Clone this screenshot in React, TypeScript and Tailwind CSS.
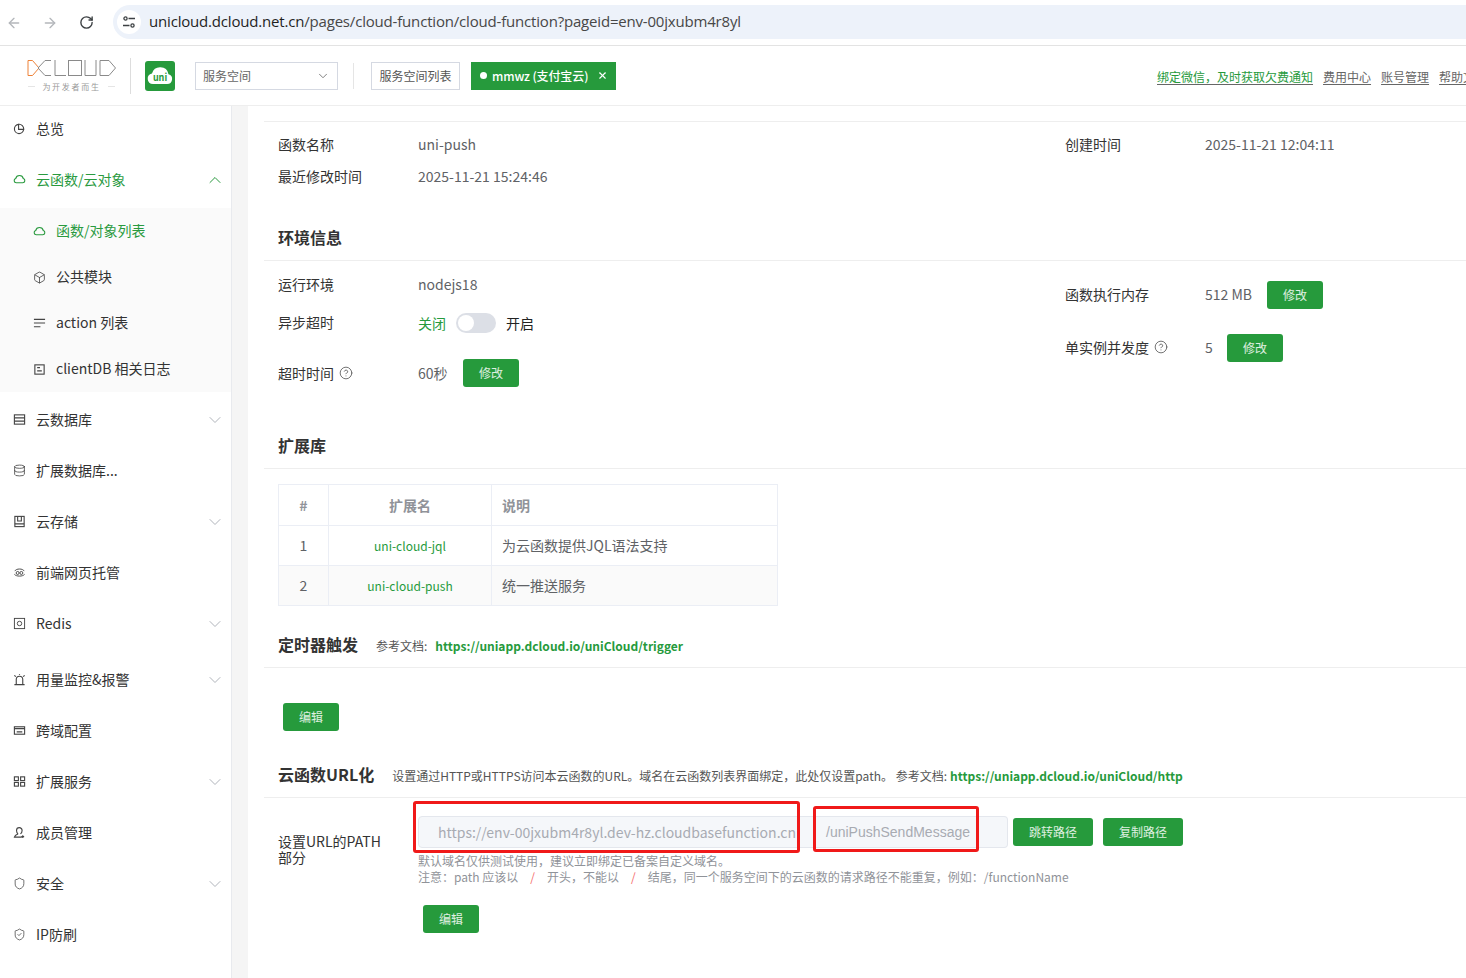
import {
  ArrowLeft,
  ArrowRight,
  Box,
  ChevronDown,
  ChevronUp,
  CircleHelp,
  Database,
  RotateCw,
  Shield,
  ShieldCheck,
  X,
} from "lucide-react";
import type { ReactNode } from "react";

const ic = "w-[13px] h-[13px]";

function Svg({ children }: { children: ReactNode }) {
  return (
    <svg viewBox="0 0 14 14" className={ic} fill="none" stroke="currentColor" strokeWidth="1.2">
      {children}
    </svg>
  );
}

const icons: Record<string, ReactNode> = {
  pie: (
    <Svg>
      <path d="M6 2.500a5 5 0 1 0 5.500 5.500H6z" />
      <path d="M6 2.500a5 5 0 0 1 5.500 5.500" />
    </Svg>
  ),
  cloud: (
    <Svg>
      <path d="M3.500 10.500h7a2.300 2.300 0 0 0 .6-4.500 4.200 4.200 0 0 0-8.200 0 2.300 2.300 0 0 0 .6 4.500z" />
    </Svg>
  ),
  box: <Box className={ic} strokeWidth={1.5} />,
  lines: (
    <Svg>
      <path d="M1 2.500h12M1 6.500h12M1 10.500h7" />
    </Svg>
  ),
  log: (
    <Svg>
      <rect x="2" y="2" width="10" height="10" />
      <path d="M4.500 8.500h5M4.500 5h3" />
    </Svg>
  ),
  table: (
    <Svg>
      <rect x="1.500" y="2" width="11" height="10" />
      <path d="M1.500 5.300h11M1.500 8.700h11" />
    </Svg>
  ),
  db: <Database className={ic} strokeWidth={1.5} />,
  store: (
    <Svg>
      <rect x="2" y="1.500" width="10" height="11" />
      <path d="M2 9.500h10M5 1.500v5h4v-5" />
    </Svg>
  ),
  host: (
    <Svg>
      <path d="M2 5.500c1-3 9-3 10 0M1.500 9c2 2.500 9 2.500 11 0" strokeWidth="1" />
      <circle cx="5" cy="7.500" r="1.600" strokeWidth="1" />
      <circle cx="9" cy="7.500" r="1.600" strokeWidth="1" />
    </Svg>
  ),
  redis: (
    <Svg>
      <rect x="1.500" y="1.500" width="11" height="11" strokeWidth="1" />
      <circle cx="7" cy="7" r="2.400" strokeWidth="1" />
    </Svg>
  ),
  alarm: (
    <Svg>
      <path d="M1.500 12.500h11M3.500 12.500V7a3.500 3.500 0 0 1 7 0v5.500" />
      <path d="M1.500 2.500l1.500 1.500M12.500 2.500L11 4M7 1v1" />
    </Svg>
  ),
  cors: (
    <Svg>
      <rect x="1.500" y="3" width="11" height="8" />
      <path d="M1.500 5h11M4 8.500h6" />
    </Svg>
  ),
  grid: (
    <Svg>
      <rect x="1.500" y="2" width="4.300" height="4" />
      <rect x="8.200" y="2" width="4.300" height="4" />
      <rect x="1.500" y="8" width="4.300" height="4" />
      <rect x="8.200" y="8" width="4.300" height="4" />
    </Svg>
  ),
  user: (
    <Svg>
      <path d="M5.500 8.500C4 7.500 3.800 6 3.800 4.800a3 3 0 0 1 6 0c0 1.200-.3 2.700-1.800 3.700M5.500 8.500c-1.500.5-3.500 1-4 3.500h8M10.500 10v3M9 11.500h3" />
    </Svg>
  ),
  shield: <Shield className={ic} strokeWidth={1.4} />,
  shieldCheck: <ShieldCheck className={ic} strokeWidth={1.4} />,
};

type MenuItem = { label: string; icon: string; arrow?: boolean };

const topMenu: MenuItem[] = [
  { label: "云数据库", icon: "table", arrow: true },
  { label: "扩展数据库...", icon: "db" },
  { label: "云存储", icon: "store", arrow: true },
  { label: "前端网页托管", icon: "host" },
  { label: "Redis", icon: "redis", arrow: true },
];

const bottomMenu: MenuItem[] = [
  { label: "跨域配置", icon: "cors" },
  { label: "扩展服务", icon: "grid", arrow: true },
  { label: "成员管理", icon: "user" },
  { label: "安全", icon: "shield", arrow: true },
  { label: "IP防刷", icon: "shieldCheck" },
];

const subMenu = [
  { label: "函数/对象列表", icon: "cloud", active: true },
  { label: "公共模块", icon: "box" },
  { label: "action 列表", icon: "lines" },
  { label: "clientDB 相关日志", icon: "log" },
];

const chevron = "w-[20px] h-[20px] text-[#b0b4bb]";

function MenuRow({ item }: { item: MenuItem }) {
  return (
    <div className="h-[51px] flex items-center pl-[13px] pr-[6px] text-[#333]">
      <span className="w-[23px] flex items-center text-[#444]">{icons[item.icon]}</span>
      <span className="flex-1">{item.label}</span>
      {item.arrow && <ChevronDown className={chevron} strokeWidth={1.2} />}
    </div>
  );
}

function Sidebar() {
  return (
    <aside className="w-[231px] shrink-0 text-[14px]">
      <div className="h-[45px] flex items-center pl-[13px] text-[#333]">
        <span className="w-[23px] flex items-center text-[#444]">{icons.pie}</span>
        总览
      </div>
      <div className="h-[57px] flex items-center pl-[13px] pr-[6px] text-[#2a9a3f]">
        <span className="w-[23px] flex items-center">{icons.cloud}</span>
        <span className="flex-1">云函数/云对象</span>
        <ChevronUp className="w-[20px] h-[20px]" strokeWidth={1.2} />
      </div>
      <div className="bg-[#fafafa] h-[184px]">
        {subMenu.map((s) => (
          <div
            key={s.label}
            className={`h-[46px] flex items-center pl-[33px] ${s.active ? "text-[#2a9a3f]" : "text-[#333]"}`}
          >
            <span className={`w-[23px] flex items-center ${s.active ? "" : "text-[#444]"}`}>{icons[s.icon]}</span>
            <span className="pb-[2px]">{s.label}</span>
          </div>
        ))}
      </div>
      <div className="pt-[2px]">
        {topMenu.map((m) => (
          <MenuRow key={m.label} item={m} />
        ))}
        <div className="h-[56px] pt-[5px] flex items-center pl-[13px] pr-[6px] text-[#333]">
          <span className="w-[23px] flex items-center text-[#444]">{icons.alarm}</span>
          <span className="flex-1">用量监控&amp;报警</span>
          <ChevronDown className={chevron} strokeWidth={1.2} />
        </div>
        {bottomMenu.map((m) => (
          <MenuRow key={m.label} item={m} />
        ))}
      </div>
    </aside>
  );
}

function BrowserBar() {
  return (
    <div className="h-[46px] border-b border-[#e3e3e3] flex items-center pl-[6px] font-['Open_Sans','Noto_Sans_CJK_SC',sans-serif]">
      <ArrowLeft className="w-[16px] h-[16px] text-[#b4b7bb]" strokeWidth={2} />
      <ArrowRight className="w-[16px] h-[16px] text-[#b4b7bb] ml-[20px]" strokeWidth={2} />
      <RotateCw className="w-[15px] h-[15px] text-[#3c4043] ml-[21px]" strokeWidth={2.2} />
      <div className="ml-[19px] flex-1 h-[34px] -mt-[1px] rounded-l-full bg-[#edf2fa] flex items-center pl-[4px]">
        <span className="w-[24px] h-[24px] rounded-full bg-white flex items-center justify-center">
          <svg viewBox="0 0 14 14" className="w-[14px] h-[14px]" fill="none" stroke="#3c4043" strokeWidth="1.300">
            <circle cx="3.500" cy="3.500" r="1.600" />
            <path d="M6.500 3.500H13M1 10.500h6.500" />
            <circle cx="10.500" cy="10.500" r="1.600" />
          </svg>
        </span>
        <span className="ml-[8px] pb-[2px] text-[15px] text-[#1f1f1f] tracking-[-0.185px] whitespace-nowrap">
          unicloud.dcloud.net.cn<span className="text-[#474747]">/pages/cloud-function/cloud-function?pageid=env-00jxubm4r8yl</span>
        </span>
      </div>
    </div>
  );
}

function Logo() {
  return (
    <div className="w-[91px] flex flex-col items-center">
      <svg viewBox="0 0 90 18" className="w-[90px] h-[18px]" fill="none" strokeWidth="1">
        <path d="M1 1.500h4.500L12 9l-6.500 7.500H1z" stroke="#ee8238" />
        <path d="M24 1.500h-6L11 9l7 7.500h6" stroke="#8a8a8a" />
        <path d="M28 1v15.500h11" stroke="#8a8a8a" />
        <rect x="41.500" y="1.500" width="13" height="15" stroke="#8a8a8a" />
        <path d="M58 1v15.500h11V1" stroke="#8a8a8a" />
        <path d="M73 1.500h9l6.500 7.500-6.500 7.500h-9z" stroke="#8a8a8a" />
      </svg>
      <div className="mt-[4px] flex items-center gap-[7px] text-[8px] leading-[12px] text-[#999] tracking-[1.7px]">
        <span className="w-[7px] h-px bg-[#e5e5e5]" />
        为开发者而生
        <span className="w-[7px] h-px bg-[#e5e5e5]" />
      </div>
    </div>
  );
}

function Header() {
  return (
    <header className="h-[60px] border-b border-[#eee] flex items-center pl-[26px] text-[12px] overflow-hidden">
      <Logo />
      <span className="ml-[13px] w-px h-[36px] bg-[#ddd]" />
      <span className="ml-[14px] w-[30px] h-[30px] rounded-[3px] bg-[#269a3c] flex items-center justify-center">
        <svg viewBox="0 0 26 20" className="w-[26px] h-[20px]">
          <path
            d="M6 18h14a5 5 0 0 0 1.500-9.800A8.500 8.500 0 0 0 5 7.500 5.300 5.300 0 0 0 6 18z"
            fill="#fff"
          />
          <text x="13" y="15" textAnchor="middle" fontSize="9" fontWeight="700" fill="#269a3c">
            uni
          </text>
        </svg>
      </span>
      <div className="ml-[20px] w-[143px] h-[28px] border border-[#d5d9e2] flex items-center justify-between pl-[7px] pr-[7px] text-[#666]">
        服务空间
        <ChevronDown className="w-[14px] h-[14px] text-[#666]" strokeWidth={1.4} />
      </div>
      <span className="ml-[15px] w-px h-[26px] bg-[#e5e5e5]" />
      <div className="ml-[17px] w-[89px] h-[28px] border border-[#d5d9e2] flex items-center justify-center text-[#555]">
        服务空间列表
      </div>
      <div className="ml-[11px] w-[145px] h-[28px] bg-[#269a3c] text-white flex items-center pl-[9px]">
        <span className="w-[7px] h-[7px] rounded-full bg-white mr-[5px]" />
        <span className="font-medium tracking-[-0.1px]">mmwz (支付宝云)</span>
        <X className="w-[11px] h-[11px] ml-[9px]" strokeWidth={2.4} />
      </div>
      <div className="flex-1" />
      <div className="flex items-center gap-[10px] whitespace-nowrap mt-[2px] w-[309px] shrink-0 underline underline-offset-2 text-[#666]">
        <span className="text-[#269a3c]">绑定微信，及时获取欠费通知</span>
        <span>费用中心</span>
        <span>账号管理</span>
        <span>帮助文档</span>
      </div>
    </header>
  );
}

function GreenButton({ children, className = "" }: { children: ReactNode; className?: string }) {
  return (
    <button className={`h-[28px] bg-[#269a3c] text-white/85 text-[12px] rounded-[3px] flex items-center justify-center ${className}`}>
      {children}
    </button>
  );
}

function SectionHead({ title, className = "", children }: { title: string; className?: string; children?: ReactNode }) {
  return (
    <div className={`h-[45px] border-b border-[#eee] flex items-center pl-[14px] pb-[2px] ${className}`}>
      <span className="text-[16px] font-bold text-[#333]">{title}</span>
      {children}
    </div>
  );
}

function Help() {
  return <CircleHelp className="inline-block w-[14px] h-[14px] ml-[5px] text-[#555]" strokeWidth={1.4} />;
}

const link = "font-bold text-[12px] text-[#269a3c]";

function Main() {
  return (
    <main className="flex-1 min-w-0 ml-[16px] text-[14px] text-[#333] overflow-hidden">
      <div className="mt-[15px] border-t border-[#eee] pt-[6px] pl-[14px] h-[72px] flex">
        <div className="w-[787px]">
          <div className="h-[32px] flex items-center">
            <span className="w-[140px]">函数名称</span>
            <span className="text-[#606266]">uni-push</span>
          </div>
          <div className="h-[32px] flex items-center">
            <span className="w-[140px]">最近修改时间</span>
            <span className="text-[#606266]">2025-11-21 15:24:46</span>
          </div>
        </div>
        <div className="h-[32px] flex items-center">
          <span className="w-[140px]">创建时间</span>
          <span className="text-[#606266]">2025-11-21 12:04:11</span>
        </div>
      </div>

      <SectionHead title="环境信息" className="mt-[23px]" />
      <div className="flex pl-[14px] h-[126px]">
        <div className="w-[787px] pt-[7px]">
          <div className="h-[32px] flex items-center">
            <span className="w-[140px]">运行环境</span>
            <span className="text-[#606266]">nodejs18</span>
          </div>
          <div className="h-[32px] mt-[6px] flex items-center">
            <span className="w-[140px]">异步超时</span>
            <span className="text-[#269a3c] mt-[2px]">关闭</span>
            <span className="ml-[10px] mt-[2px] w-[40px] h-[20px] rounded-full bg-[#dcdfe6] p-[2px]">
              <span className="block w-[16px] h-[16px] rounded-full bg-white" />
            </span>
            <span className="ml-[10px] mt-[2px] text-[#222]">开启</span>
          </div>
          <div className="h-[28px] mt-[21px] flex items-center">
            <span className="w-[140px] flex items-center">
              超时时间
              <Help />
            </span>
            <span className="text-[#606266] w-[45px]">60秒</span>
            <GreenButton className="w-[56px]">修改</GreenButton>
          </div>
        </div>
        <div className="pt-[20px]">
          <div className="h-[28px] flex items-center">
            <span className="w-[140px] pb-[2px]">函数执行内存</span>
            <span className="text-[#606266] w-[62px] pb-[2px]">512 MB</span>
            <GreenButton className="w-[56px]">修改</GreenButton>
          </div>
          <div className="h-[28px] mt-[25px] flex items-center">
            <span className="w-[140px] flex items-center pb-[2px]">
              单实例并发度
              <Help />
            </span>
            <span className="text-[#606266] w-[22px] pb-[2px]">5</span>
            <GreenButton className="w-[56px]">修改</GreenButton>
          </div>
        </div>
      </div>

      <SectionHead title="扩展库" className="mt-[37px]" />
      <div className="mt-[15px] ml-[14px] w-[500px] border border-[#ebeef5] text-[#606266]">
        <div className="h-[41px] flex items-center border-b border-[#ebeef5] font-bold text-[#909399]">
          <span className="w-[50px] h-full flex items-center justify-center border-r border-[#ebeef5]">#</span>
          <span className="w-[163px] h-full flex items-center justify-center border-r border-[#ebeef5]">扩展名</span>
          <span className="pl-[10px]">说明</span>
        </div>
        <div className="h-[40px] flex items-center border-b border-[#ebeef5]">
          <span className="w-[50px] h-full flex items-center justify-center border-r border-[#ebeef5]">1</span>
          <span className="w-[163px] h-full flex items-center justify-center border-r border-[#ebeef5] text-[12px] text-[#269a3c]">uni-cloud-jql</span>
          <span className="pl-[10px]">为云函数提供JQL语法支持</span>
        </div>
        <div className="h-[39px] flex items-center bg-[#fafafa]">
          <span className="w-[50px] h-full flex items-center justify-center border-r border-[#ebeef5]">2</span>
          <span className="w-[163px] h-full flex items-center justify-center border-r border-[#ebeef5] text-[12px] text-[#269a3c]">uni-cloud-push</span>
          <span className="pl-[10px]">统一推送服务</span>
        </div>
      </div>

      <SectionHead title="定时器触发" className="mt-[17px]">
        <span className="ml-[18px] mt-[3px] text-[12px] text-[#555]">参考文档:</span>
        <span className={`ml-[8px] mt-[3px] ${link}`}>https://uniapp.dcloud.io/uniCloud/trigger</span>
      </SectionHead>
      <GreenButton className="w-[56px] mt-[35px] ml-[19px]">编辑</GreenButton>

      <SectionHead title="云函数URL化" className="mt-[22px]">
        <span className="ml-[18px] mt-[3px] text-[12px] text-[#555] whitespace-nowrap">
          设置通过HTTP或HTTPS访问本云函数的URL。域名在云函数列表界面绑定，此处仅设置path。 参考文档:
        </span>
        <span className={`ml-[3px] mt-[3px] ${link}`}>https://uniapp.dcloud.io/uniCloud/http</span>
      </SectionHead>

      <div className="mt-[18px] pl-[14px] flex">
        <div className="w-[140px] pt-[17px] pr-[30px] text-[14px] leading-[16px]">设置URL的PATH部分</div>
        <div>
          <div className="flex items-center">
            <div className="w-[380px] h-[32px] bg-[#f5f7fa] border border-[#e4e7ed] rounded-l-[4px] pl-[19px] flex items-center text-[14px] text-[#a8abb2] whitespace-nowrap overflow-hidden">
              https://env-00jxubm4r8yl.dev-hz.cloudbasefunction.cn
            </div>
            <div className="w-[210px] h-[32px] bg-[#f5f7fa] border border-l-0 border-[#e4e7ed] rounded-r-[4px] pl-[28px] pt-[1px] flex items-center font-['Liberation_Sans',sans-serif] text-[14px] text-[#a8abb2]">
              /uniPushSendMessage
            </div>
            <GreenButton className="w-[80px] ml-[5px]">跳转路径</GreenButton>
            <GreenButton className="w-[80px] ml-[10px]">复制路径</GreenButton>
          </div>
          <div className="mt-[5px] text-[12px] leading-[16px] text-[#909399]">
            <div>默认域名仅供测试使用，建议立即绑定已备案自定义域名。</div>
            <div className="flex whitespace-nowrap">
              注意：path 应该以<span className="text-[#f56c6c] mx-[12px]">/</span>开头，不能以
              <span className="text-[#f56c6c] mx-[12px]">/</span>结尾，同一个服务空间下的云函数的请求路径不能重复，例如：/functionName
            </div>
          </div>
          <GreenButton className="w-[56px] mt-[20px] ml-[5px]">编辑</GreenButton>
        </div>
      </div>
    </main>
  );
}

export default function App() {
  return (
    <div className="relative w-[1466px] h-[978px] overflow-hidden bg-white font-['Noto_Sans_CJK_SC','Noto_Sans',sans-serif]">
      <BrowserBar />
      <Header />
      <div className="flex h-[872px]">
        <Sidebar />
        <div className="w-[17px] shrink-0 bg-[#f5f5f5] border-l border-[#e8eaee]" />
        <Main />
      </div>
      {/* red annotation boxes from the screenshot */}
      <div className="absolute left-[413px] top-[801px] w-[387px] h-[52px] border-[3px] border-[#f01919] rounded-[3px]" />
      <div className="absolute left-[813px] top-[806px] w-[166px] h-[46px] border-[3px] border-[#f01919] rounded-[3px]" />
    </div>
  );
}
